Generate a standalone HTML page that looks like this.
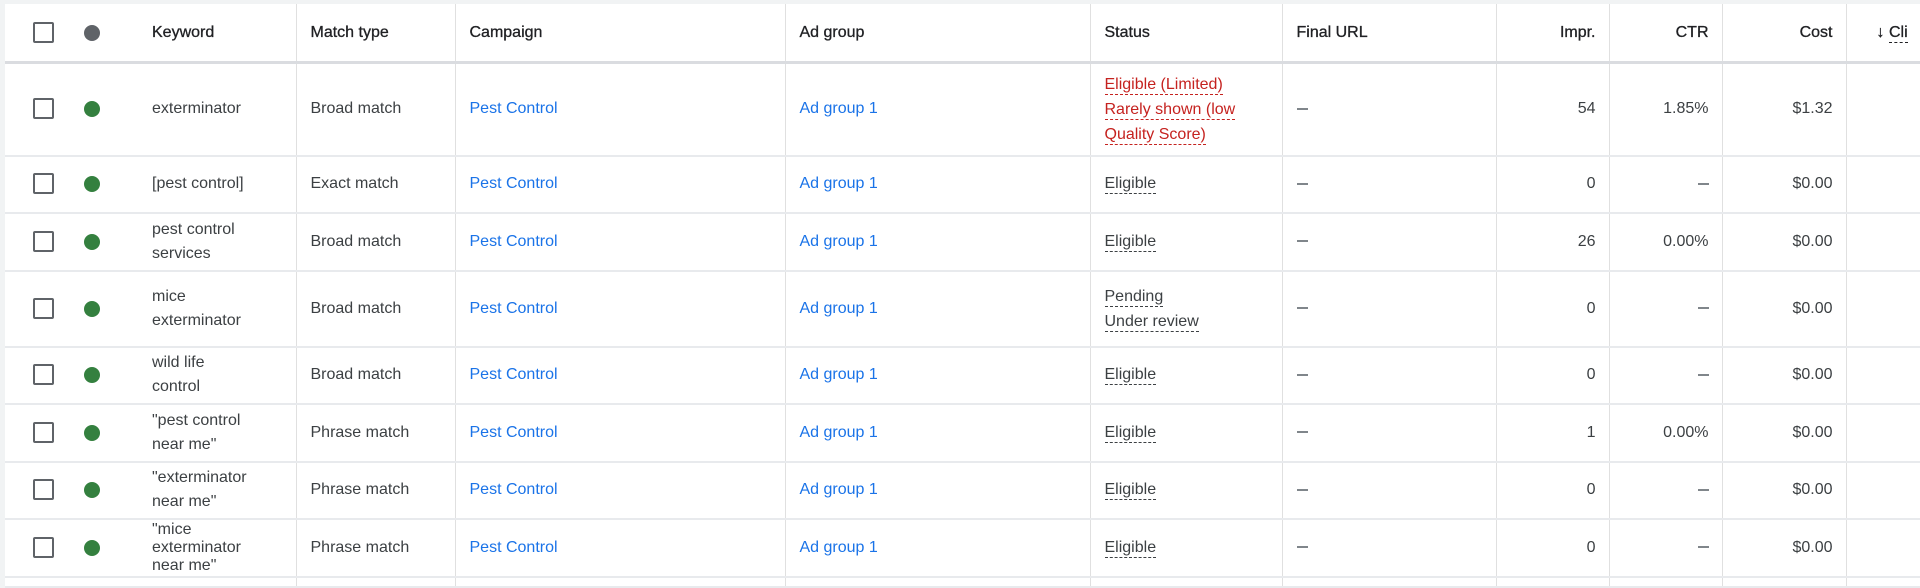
<!DOCTYPE html>
<html><head><meta charset="utf-8"><style>
html,body{margin:0;padding:0;background:#f1f3f4;width:1920px;height:585px;overflow:hidden}
body{font-family:"Liberation Sans",Arial,sans-serif;font-size:16px;color:#3c4043}
table{position:absolute;left:5px;top:4px;border-collapse:collapse;table-layout:fixed;background:#fff;width:1915px}
td{border-right:1px solid #e0e0e0;border-bottom:2px solid #e8eaed;padding:0;vertical-align:middle;line-height:24px}
tr.h td{height:57px;border-bottom:3px solid #dadce0;color:#202124;-webkit-text-stroke:0.3px #202124}
td.c0{position:relative}
.cb{position:absolute;left:28px;top:50%;margin-top:-11px;width:17px;height:17px;border:2.5px solid #5f6368;border-radius:2px}
.dot{position:absolute;left:79px;top:50%;margin-top:-8px;width:16px;height:16px;border-radius:50%;background:#34803f}
.h .dot{background:#5f6368}
.kw{margin-left:147px;width:115px}
.p{padding-left:14px}
.r{text-align:right;padding-right:13px}
a{color:#1a73e8;text-decoration:none}
.u{border-bottom:1.5px dashed #3c4043;padding-bottom:1px}
.red{color:#c5221f}.red .u{border-color:#c5221f}
.st{line-height:25px}
.d{display:inline-block;width:11px;height:2px;background:#80868b;vertical-align:middle}
</style></head><body>
<table>
<colgroup><col style="width:291px"><col style="width:159px"><col style="width:330px"><col style="width:305px"><col style="width:192px"><col style="width:214px"><col style="width:113px"><col style="width:113px"><col style="width:124px"><col></colgroup>
<tr class="h"><td class="c0"><div class="cb"></div><div class="dot"></div><div class="kw">Keyword</div></td><td class="p">Match type</td><td class="p">Campaign</td><td class="p">Ad group</td><td class="p">Status</td><td class="p">Final URL</td><td class="r">Impr.</td><td class="r">CTR</td><td class="r">Cost</td><td style="padding-left:30px;border-right:0">↓ <span class="u" style="border-color:#202124">Cli</span></td></tr>
<tr style="height:93px"><td class="c0"><div class="cb"></div><div class="dot"></div><div class="kw">exterminator</div></td><td class="p">Broad match</td><td class="p"><a>Pest Control</a></td><td class="p"><a>Ad group 1</a></td><td class="p st red"><span class="u">Eligible (Limited)</span><br><span class="u">Rarely shown (low</span><br><span class="u">Quality Score)</span></td><td class="p"><span class="d"></span></td><td class="r">54</td><td class="r">1.85%</td><td class="r">$1.32</td><td style="border-right:0"></td></tr>
<tr style="height:57px"><td class="c0"><div class="cb"></div><div class="dot"></div><div class="kw">[pest control]</div></td><td class="p">Exact match</td><td class="p"><a>Pest Control</a></td><td class="p"><a>Ad group 1</a></td><td class="p"><span class="u">Eligible</span></td><td class="p"><span class="d"></span></td><td class="r">0</td><td class="r"><span class="d"></span></td><td class="r">$0.00</td><td style="border-right:0"></td></tr>
<tr style="height:58px"><td class="c0"><div class="cb"></div><div class="dot"></div><div class="kw">pest control<br>services</div></td><td class="p">Broad match</td><td class="p"><a>Pest Control</a></td><td class="p"><a>Ad group 1</a></td><td class="p"><span class="u">Eligible</span></td><td class="p"><span class="d"></span></td><td class="r">26</td><td class="r">0.00%</td><td class="r">$0.00</td><td style="border-right:0"></td></tr>
<tr style="height:76px"><td class="c0"><div class="cb"></div><div class="dot"></div><div class="kw">mice<br>exterminator</div></td><td class="p">Broad match</td><td class="p"><a>Pest Control</a></td><td class="p"><a>Ad group 1</a></td><td class="p st"><span class="u">Pending</span><br><span class="u">Under review</span></td><td class="p"><span class="d"></span></td><td class="r">0</td><td class="r"><span class="d"></span></td><td class="r">$0.00</td><td style="border-right:0"></td></tr>
<tr style="height:57px"><td class="c0"><div class="cb"></div><div class="dot"></div><div class="kw">wild life<br>control</div></td><td class="p">Broad match</td><td class="p"><a>Pest Control</a></td><td class="p"><a>Ad group 1</a></td><td class="p"><span class="u">Eligible</span></td><td class="p"><span class="d"></span></td><td class="r">0</td><td class="r"><span class="d"></span></td><td class="r">$0.00</td><td style="border-right:0"></td></tr>
<tr style="height:58px"><td class="c0"><div class="cb"></div><div class="dot"></div><div class="kw">"pest control<br>near me"</div></td><td class="p">Phrase match</td><td class="p"><a>Pest Control</a></td><td class="p"><a>Ad group 1</a></td><td class="p"><span class="u">Eligible</span></td><td class="p"><span class="d"></span></td><td class="r">1</td><td class="r">0.00%</td><td class="r">$0.00</td><td style="border-right:0"></td></tr>
<tr style="height:57px"><td class="c0"><div class="cb"></div><div class="dot"></div><div class="kw">"exterminator<br>near me"</div></td><td class="p">Phrase match</td><td class="p"><a>Pest Control</a></td><td class="p"><a>Ad group 1</a></td><td class="p"><span class="u">Eligible</span></td><td class="p"><span class="d"></span></td><td class="r">0</td><td class="r"><span class="d"></span></td><td class="r">$0.00</td><td style="border-right:0"></td></tr>
<tr style="height:58px"><td class="c0"><div class="cb"></div><div class="dot"></div><div class="kw" style="line-height:18px">"mice<br>exterminator<br>near me"</div></td><td class="p">Phrase match</td><td class="p"><a>Pest Control</a></td><td class="p"><a>Ad group 1</a></td><td class="p"><span class="u">Eligible</span></td><td class="p"><span class="d"></span></td><td class="r">0</td><td class="r"><span class="d"></span></td><td class="r">$0.00</td><td style="border-right:0"></td></tr>
<tr style="height:10px"><td></td><td></td><td></td><td></td><td></td><td></td><td></td><td></td><td></td><td style="border-right:0"></td></tr>
</table>
</body></html>
